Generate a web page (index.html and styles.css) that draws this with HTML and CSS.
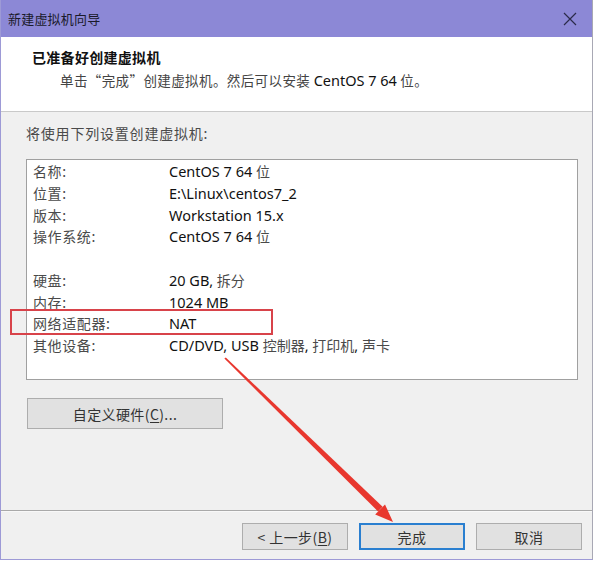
FILE: index.html
```html
<!DOCTYPE html>
<html lang="zh-CN">
<head>
<meta charset="utf-8">
<title>新建虚拟机向导</title>
<link rel="stylesheet" href="styles.css">
</head>
<body>
<div class="window">
  <div class="titlebar">
    <span class="title">新建虚拟机向导</span>
    <svg class="close" width="14" height="14" viewBox="0 0 14 14"><path d="M1 1L13 13M13 1L1 13" stroke="#2b2b4a" stroke-width="1.2" fill="none"/></svg>
  </div>
  <div class="header">
    <div class="h-title">已准备好创建虚拟机</div>
    <div class="h-sub">单击“完成”创建虚拟机。然后可以安装 <span class="lat">CentOS 7 64</span> 位。</div>
  </div>
  <div class="content">
    <div class="intro">将使用下列设置创建虚拟机:</div>
    <div class="listbox">
      <div class="row"><span class="k">名称:</span><span class="v">CentOS 7 64 <span class="cj">位</span></span></div>
      <div class="row"><span class="k">位置:</span><span class="v">E:\Linux\centos7_2</span></div>
      <div class="row"><span class="k">版本:</span><span class="v">Workstation 15.x</span></div>
      <div class="row"><span class="k">操作系统:</span><span class="v">CentOS 7 64 <span class="cj">位</span></span></div>
      <div class="row"></div>
      <div class="row"><span class="k">硬盘:</span><span class="v">20 GB, <span class="cj">拆分</span></span></div>
      <div class="row"><span class="k">内存:</span><span class="v">1024 MB</span></div>
      <div class="row"><span class="k">网络适配器:</span><span class="v">NAT</span></div>
      <div class="row"><span class="k">其他设备:</span><span class="v">CD/DVD, USB <span class="cj">控制器</span>, <span class="cj">打印机</span>, <span class="cj">声卡</span></span></div>
    </div>
    <div class="custom-row"><button class="btn custom">自定义硬件(<u>C</u>)...</button></div>
  </div>
  <div class="footer">
    <button class="btn">&lt; 上一步(<u>B</u>)</button>
    <button class="btn primary">完成</button>
    <button class="btn">取消</button>
  </div>
  <div class="highlight"></div>
  <svg class="arrow" width="594" height="561" viewBox="0 0 594 561">
    <polygon points="224.4,358.6 225.8,357.4 382.6,506.8 378.0,511.4" fill="#e8372e"/>
    <polygon points="393,522 375.2,514.4 385,504.4" fill="#e8372e"/>
  </svg>
</div>
</body>
</html>
```
FILE: styles.css
```css
html, body {
  margin: 0;
  padding: 0;
  background: #ffffff;
}
body {
  font-family: "Noto Sans", "Noto Sans CJK SC", sans-serif;
  color: #1e1e1e;
}
.window {
  position: relative;
  width: 592px;
  height: 559px;
  border-left: 1px solid #9d9ad6;
  border-bottom: 1px solid #9d9ad6;
  border-right: 1px solid #a8a8b4;
  background: #f0f0f0;
  display: flex;
  flex-direction: column;
  box-sizing: border-box;
  width: 593px;
  height: 560px;
}
.titlebar {
  height: 37px;
  background: #8c88d6;
  display: flex;
  align-items: center;
  justify-content: space-between;
  padding: 0 15px 0 7px;
  flex: none;
}
.title {
  font-family: "Noto Sans CJK SC", sans-serif;
  font-size: 13px;
  color: #1a1a2a;
  letter-spacing: 0.2px;
}
.close {
  display: block;
  margin-top: 1px;
}
.header {
  height: 74px;
  background: #ffffff;
  border-bottom: 1px solid #c9c9c9;
  flex: none;
  box-sizing: border-box;
  height: 75px;
  padding: 9px 0 0 31px;
}
.h-title {
  font-family: "Noto Sans CJK SC", serif;
  font-weight: bold;
  font-size: 14px;
  line-height: 22px;
  color: #111;
  letter-spacing: 0.3px;
}
.h-sub {
  font-family: "Noto Sans CJK SC", sans-serif;
  font-size: 13.5px;
  line-height: 24px;
  color: #444;
  padding-left: 28px;
  letter-spacing: 0.4px;
}
.lat {
  font-family: "Noto Sans", sans-serif;
  font-size: 14.5px;
  color: #111;
  letter-spacing: 0;
}
.content {
  flex: 1;
  padding: 10px 14px 0 25px;
  display: flex;
  flex-direction: column;
  border-bottom: 1px solid #a9a9a9;
}
.intro {
  font-family: "Noto Sans CJK SC", sans-serif;
  font-size: 14px;
  line-height: 22px;
  color: #4a4a4a;
  letter-spacing: 0.8px;
}
.listbox {
  margin-top: 15px;
  height: 221px;
  box-sizing: border-box;
  background: #ffffff;
  border: 1px solid #a0a0a0;
  padding: 1px 0 0 6px;
}
.row {
  height: 21.75px;
  line-height: 21.75px;
  display: flex;
  white-space: nowrap;
}
.k {
  width: 136px;
  flex: none;
  font-family: "Noto Sans CJK SC", sans-serif;
  font-size: 14px;
  color: #4a4a4a;
  letter-spacing: 0.6px;
}
.v {
  font-family: "Noto Sans", sans-serif;
  font-size: 14.5px;
  color: #111;
}
.cj {
  font-family: "Noto Sans CJK SC", sans-serif;
  font-size: 14px;
  color: #4a4a4a;
}
.custom-row {
  margin-top: 18px;
}
.btn {
  font-family: "Noto Sans CJK SC", "Noto Sans", sans-serif;
  font-size: 14px;
  color: #333;
  background: #e1e1e1;
  border: 1px solid #adadad;
  width: 106px;
  height: 27px;
  padding: 0;
  margin: 0;
  box-sizing: border-box;
  letter-spacing: 0.4px;
}
.btn u {
  text-underline-offset: 2px;
}
.custom {
  width: 196px;
  height: 31px;
  margin-left: 1px;
}
.footer {
  flex: none;
  height: 48px;
  box-sizing: border-box;
  border-top: 1px solid #f8f8f8;
  display: flex;
  justify-content: flex-end;
  gap: 11px;
  padding: 11px 10px 0 0;
}
.primary {
  border: 2px solid #2a7fd0;
}
.highlight {
  position: absolute;
  left: 9px;
  top: 309px;
  width: 263px;
  height: 26px;
  box-sizing: border-box;
  border: 2px solid #d8434a;
}
.arrow {
  position: absolute;
  left: -1px;
  top: 0;
  pointer-events: none;
}
```
